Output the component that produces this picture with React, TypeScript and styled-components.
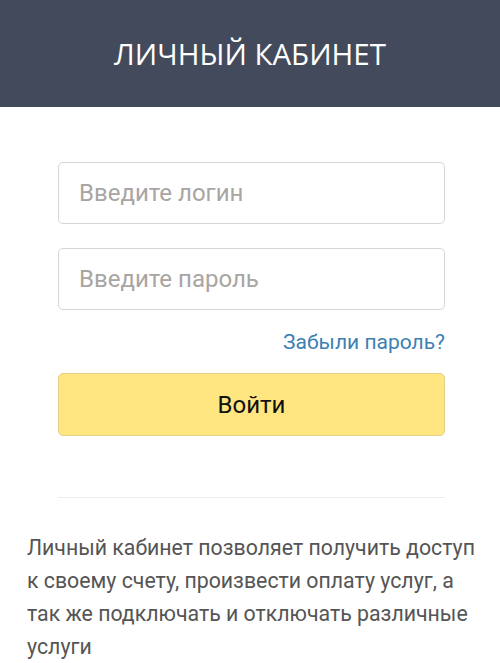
import React from "react";
import styled, { createGlobalStyle } from "styled-components";

const Global = createGlobalStyle`
  html, body { margin: 0; padding: 0; background: #ffffff; }
  body { font-family: Roboto, "Noto Sans", sans-serif; }
  * { box-sizing: border-box; }
`;

const Page = styled.div`
  width: 500px;
  display: flex;
  flex-direction: column;
`;

const Header = styled.header`
  height: 107px;
  background: #434a5b;
  display: flex;
  align-items: center;
  justify-content: center;
`;

const Title = styled.h1`
  margin: 0;
  color: #ffffff;
  font-family: "Open Sans", sans-serif;
  font-weight: 400;
  font-size: 29.5px;
`;

const Form = styled.form`
  display: flex;
  flex-direction: column;
  padding: 55px 55px 0 58px;
`;

const Input = styled.input<{ $mt?: number }>`
  height: 62px;
  width: 100%;
  border: 1px solid #d6d6d6;
  border-radius: 5px;
  padding: 0 20px;
  margin-top: ${(p) => p.$mt ?? 0}px;
  font-family: Roboto, sans-serif;
  font-size: 24px;
  color: #333;
  outline: none;
  &::placeholder { color: #a8a5a2; }
`;

const LinkRow = styled.div`
  display: flex;
  justify-content: flex-end;
  margin-top: 18px;
`;

const Forgot = styled.a`
  font-family: Roboto, sans-serif;
  font-size: 21px;
  color: #3d7fb2;
  text-decoration: none;
  line-height: 28px;
`;

const Submit = styled.button`
  margin-top: 17px;
  height: 63px;
  width: 100%;
  background: #ffe680;
  border: 1px solid #e3cf85;
  border-radius: 5px;
  font-family: Roboto, sans-serif;
  font-size: 24px;
  color: #111;
  cursor: pointer;
`;

const Divider = styled.hr`
  margin: 61px 55px 0 58px;
  border: 0;
  border-top: 1px solid #ececec;
`;

const Info = styled.p`
  margin: 33px 22px 0 27px;
  font-family: Roboto, sans-serif;
  font-size: 21.3px;
  line-height: 33px;
  color: #555555;
`;

export default function App() {
  return (
    <>
      <Global />
      <Page>
        <Header>
          <Title>ЛИЧНЫЙ КАБИНЕТ</Title>
        </Header>
        <Form onSubmit={(e) => e.preventDefault()}>
          <Input type="text" placeholder="Введите логин" />
          <Input type="password" placeholder="Введите пароль" $mt={24} />
          <LinkRow>
            <Forgot href="#">Забыли пароль?</Forgot>
          </LinkRow>
          <Submit type="submit">Войти</Submit>
        </Form>
        <Divider />
        <Info>
          Личный кабинет позволяет получить доступ к своему счету, произвести
          оплату услуг, а так же подключать и отключать различные услуги
        </Info>
      </Page>
    </>
  );
}
